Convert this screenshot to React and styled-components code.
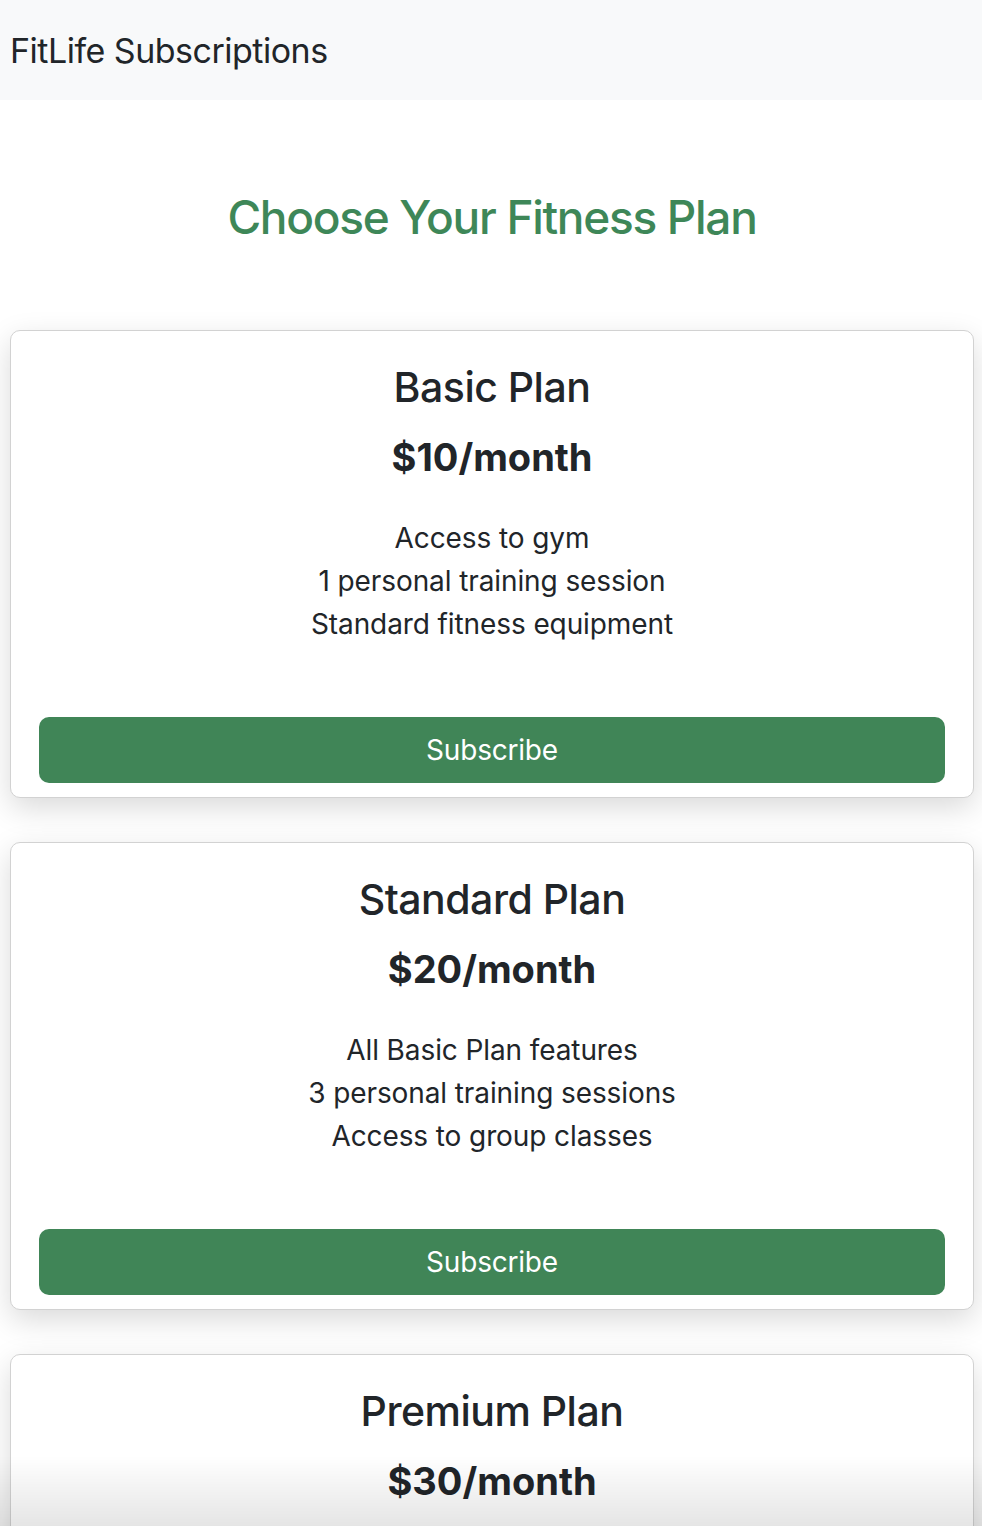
import React from 'react';
import styled, { createGlobalStyle } from 'styled-components';

const GlobalStyle = createGlobalStyle`
  * {
    box-sizing: border-box;
  }
  body {
    margin: 0;
    background: #fff;
    color: #212529;
    font-family: Inter, 'Noto Sans', 'Liberation Sans', sans-serif;
  }
`;

const Navbar = styled.nav`
  height: 100px;
  background-color: #f8f9fa;
  display: flex;
  align-items: center;
  padding: 0 10px;
`;

const Brand = styled.div`
  font-size: 34px;
  font-weight: 400;
  color: #212529;
  letter-spacing: -0.5px;
`;

const Main = styled.main`
  padding: 0 8px 0 10px;
`;

const Heading = styled.h2`
  margin: 0;
  padding: 88px 0 0;
  height: 230px;
  text-align: center;
  color: #3e8758;
  font-size: 46px;
  font-weight: 500;
  letter-spacing: -1.3px;
  line-height: 58px;
`;

const CardList = styled.div`
  display: flex;
  flex-direction: column;
  gap: 44px;
`;

const Card = styled.div`
  background: #fff;
  border: 1px solid #d2d2d2;
  border-radius: 10px;
  box-shadow: 0 10px 30px rgba(0, 0, 0, 0.15);
  padding: 32px 28px 14px;
  text-align: center;
`;

const PlanName = styled.h3`
  margin: 0;
  font-size: 41px;
  font-weight: 500;
  line-height: 48px;
  letter-spacing: -0.5px;
`;

const Price = styled.div`
  margin-top: 24px;
  font-size: 38px;
  font-weight: 700;
  line-height: 44px;
  letter-spacing: 0;
`;

const Features = styled.ul`
  list-style: none;
  margin: 38px 0 0;
  padding: 0;
  font-size: 28px;
  line-height: 43px;
  letter-spacing: -0.1px;
`;

const SubscribeButton = styled.button`
  display: block;
  width: 100%;
  margin-top: 71px;
  height: 66px;
  border: none;
  border-radius: 10px;
  background-color: #408557;
  color: #fff;
  font-family: inherit;
  font-size: 28px;
  letter-spacing: -0.2px;
  cursor: pointer;
`;

const BottomFade = styled.div`
  position: fixed;
  left: 0;
  right: 0;
  bottom: 0;
  height: 70px;
  background: linear-gradient(rgba(0, 0, 0, 0), rgba(0, 0, 0, 0.1));
  pointer-events: none;
`;

const plans = [
  {
    name: 'Basic Plan',
    price: '$10/month',
    features: ['Access to gym', '1 personal training session', 'Standard fitness equipment'],
  },
  {
    name: 'Standard Plan',
    price: '$20/month',
    features: ['All Basic Plan features', '3 personal training sessions', 'Access to group classes'],
  },
  {
    name: 'Premium Plan',
    price: '$30/month',
    features: ['All Standard Plan features', 'Unlimited personal training', 'Access to spa and sauna'],
  },
];

const App = () => {
  return (
    <>
      <GlobalStyle />
      <Navbar>
        <Brand>FitLife Subscriptions</Brand>
      </Navbar>
      <Main>
        <Heading>Choose Your Fitness Plan</Heading>
        <CardList>
          {plans.map((plan) => (
            <Card key={plan.name}>
              <PlanName>{plan.name}</PlanName>
              <Price>{plan.price}</Price>
              <Features>
                {plan.features.map((f) => (
                  <li key={f}>{f}</li>
                ))}
              </Features>
              <SubscribeButton>Subscribe</SubscribeButton>
            </Card>
          ))}
        </CardList>
      </Main>
      <BottomFade />
    </>
  );
};

export default App;
